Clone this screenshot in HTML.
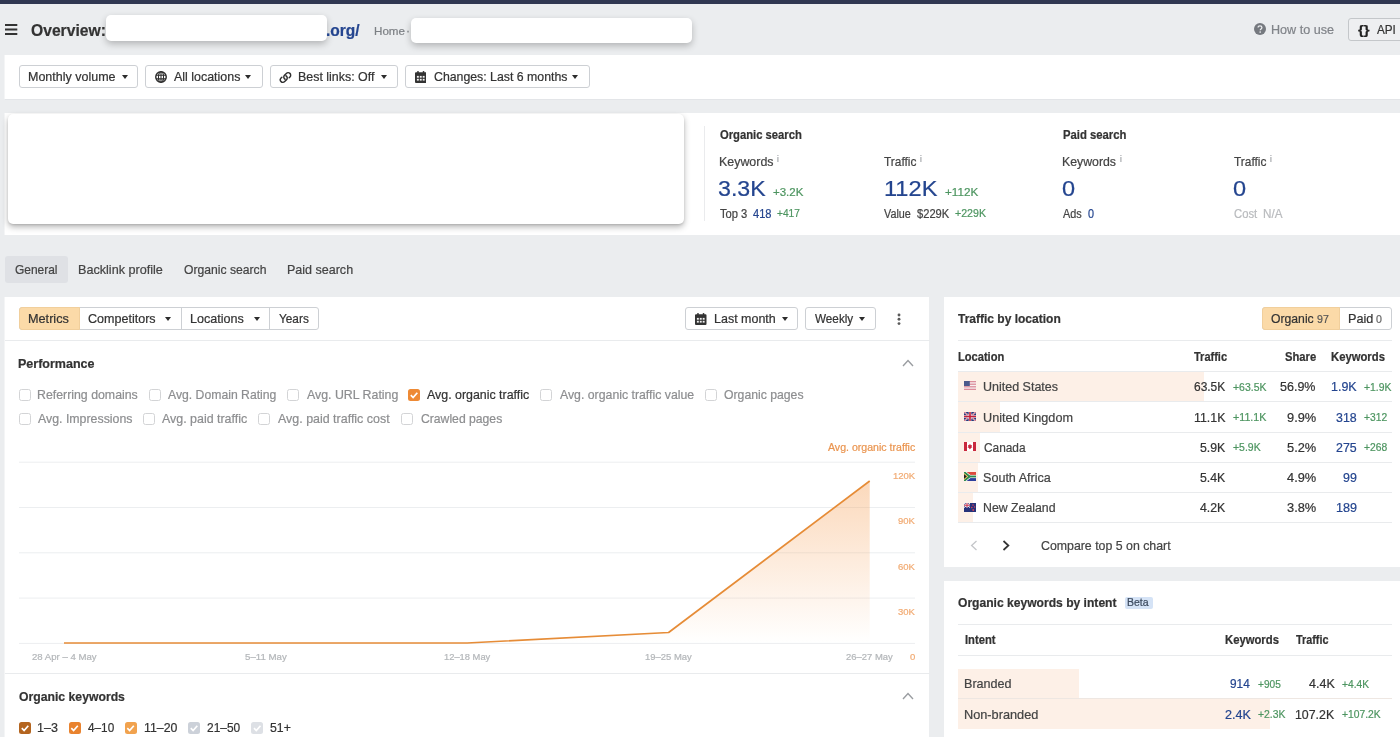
<!DOCTYPE html>
<html lang="en">
<head>
<meta charset="utf-8">
<title>Overview</title>
<style>
*{box-sizing:border-box;margin:0;padding:0}
html,body{width:1400px;height:737px;overflow:hidden}
body{background:#ebedef;font-family:"Liberation Sans",Arial,sans-serif;font-size:13px;color:#333;position:relative}
.a{position:absolute}
.t{position:absolute;white-space:nowrap;line-height:1;transform-origin:0 0;-webkit-text-stroke:.22px currentColor}
.btn{position:absolute;border:1px solid #cdd0d4;border-radius:3px;background:#fff}
.car{position:absolute;width:0;height:0;border-left:3.5px solid transparent;border-right:3.5px solid transparent;border-top:4.5px solid #2c2c2c}
.cb{position:absolute;width:12px;height:12px;border:1px solid #d3d4d6;border-radius:2.5px;background:#fff}
.cbx{position:absolute;width:12px;height:12px;border-radius:2.5px}
.hl{position:absolute;height:1px;background:#e9ebed}
.bar{position:absolute;background:#fdf0e7}
</style>
</head>
<body>
<!-- top stripe -->
<div class="a" style="left:0;top:0;width:1400px;height:4px;background:#303751"></div>

<!-- header -->
<svg class="a" style="left:5px;top:23px" width="13" height="13" viewBox="0 0 13 13"><rect x="0" y="1" width="12.3" height="2" fill="#333"/><rect x="0" y="5.5" width="12.3" height="2" fill="#333"/><rect x="0" y="10" width="12.3" height="2" fill="#333"/></svg>
<div class="a" style="left:106px;top:15px;width:221px;height:26px;background:#fff;border-radius:5px;box-shadow:0 3px 7px rgba(0,0,0,.24)"></div>
<div class="a" style="left:411px;top:18px;width:281px;height:25px;background:#fff;border-radius:5px;box-shadow:0 3px 7px rgba(0,0,0,.24)"></div>
<svg class="a" style="left:1254px;top:23.4px" width="12" height="12" viewBox="0 0 12 12"><circle cx="6" cy="6" r="6" fill="#75797f"/><path d="M4.1 4.6c0-1.1.8-1.8 1.9-1.8s1.9.7 1.9 1.7c0 1.4-1.7 1.4-1.7 2.7" fill="none" stroke="#ebedef" stroke-width="1.3"/><circle cx="6.2" cy="9" r=".85" fill="#ebedef"/></svg>
<div class="btn" style="left:1347.5px;top:18px;width:60px;height:23px;background:#eeeff1;border-color:#c4c7ca"></div>

<!-- half-pixel left edge -->
<div class="a" style="left:4px;top:55px;width:1px;height:44px;background:#f4f5f6"></div><div class="a" style="left:4px;top:113px;width:1px;height:122px;background:#f4f5f6"></div><div class="a" style="left:4px;top:297px;width:1px;height:440px;background:#f4f5f6"></div>
<!-- filter bar -->
<div class="a" style="left:5px;top:55px;width:1395px;height:44.5px;background:#fff;border-bottom:1px solid #e3e5e8"></div>
<div class="btn" style="left:19px;top:65px;width:118.5px;height:23px"></div><div class="car" style="left:121.7px;top:75px"></div>
<div class="btn" style="left:145px;top:65px;width:117.5px;height:23px"></div><div class="car" style="left:245.3px;top:75px"></div>
<div class="btn" style="left:270px;top:65px;width:127.5px;height:23px"></div><div class="car" style="left:380.8px;top:75px"></div>
<div class="btn" style="left:405px;top:65px;width:184.5px;height:23px"></div><div class="car" style="left:572.3px;top:75px"></div>
<!-- globe -->
<svg class="a" style="left:155px;top:71.3px" width="12" height="12" viewBox="0 0 12 12" fill="none" stroke="#2e2e2e"><circle cx="6" cy="6" r="5.25" stroke-width="1.45"/><ellipse cx="6" cy="6" rx="2.55" ry="5.2" stroke-width="1.05"/><path d="M1 4.15h10M1 7.85h10M6 .8v10.400" stroke-width="1.05"/></svg>
<!-- link -->
<svg class="a" style="left:278.6px;top:70.7px" width="13" height="13" viewBox="0 0 14 14" fill="none" stroke="#2e2e2e" stroke-width="1.55" stroke-linecap="round"><path d="M6.600 8.900a2.700 2.700 0 0 1-.7-4.300l2-2a2.700 2.700 0 0 1 3.900 3.800l-.9.900"/><path d="M7.400 5.100a2.700 2.700 0 0 1 .7 4.300l-2 2a2.700 2.700 0 0 1-3.900-3.800l.9-.9"/></svg>
<!-- calendar -->
<svg class="a" style="left:414.5px;top:70.8px" width="11.5" height="12" viewBox="0 0 11.5 12"><path d="M0 2.2a1 1 0 0 1 1-1h9.5a1 1 0 0 1 1 1V11a1 1 0 0 1-1 1H1a1 1 0 0 1-1-1z" fill="#333"/><rect x="2.2" y="0" width="1.5" height="2.6" rx=".6" fill="#333"/><rect x="7.8" y="0" width="1.5" height="2.6" rx=".6" fill="#333"/><g fill="#f2f2f2"><rect x="1.9" y="4.9" width="1.9" height="1.8"/><rect x="4.8" y="4.9" width="1.9" height="1.8"/><rect x="7.700" y="4.9" width="1.9" height="1.8"/><rect x="1.9" y="7.800" width="1.9" height="1.8"/><rect x="4.8" y="7.800" width="1.9" height="1.8"/><rect x="7.700" y="7.800" width="1.9" height="1.8"/></g></svg>

<!-- summary strip -->
<div class="a" style="left:5px;top:112.5px;width:1395px;height:122.5px;background:#fff"></div>
<div class="a" style="left:8px;top:114px;width:676px;height:109.5px;background:#fff;border-radius:5px;box-shadow:0 3px 6px rgba(0,0,0,.29),0 1px 2px rgba(0,0,0,.10)"></div>
<div class="a" style="left:704px;top:126px;width:1px;height:95px;background:#eaebed"></div>

<!-- tabs -->
<div class="a" style="left:5px;top:256px;width:63px;height:26.5px;background:#dfe1e5;border-radius:3px"></div>

<!-- main panel -->
<div class="a" style="left:5px;top:297px;width:924.4px;height:440px;background:#fff"></div>
<!-- segmented -->
<div class="btn" style="left:19px;top:307px;width:300px;height:22.6px"></div>
<div class="a" style="left:19px;top:307px;width:60.5px;height:22.6px;background:#fbdaa8;border:1px solid #f1cf9c;border-radius:3px 0 0 3px"></div>
<div class="a" style="left:180.5px;top:308px;width:1px;height:21px;background:#cdd0d4"></div>
<div class="a" style="left:269px;top:308px;width:1px;height:21px;background:#cdd0d4"></div>
<div class="car" style="left:165.2px;top:317px"></div>
<div class="car" style="left:253.5px;top:317px"></div>
<div class="btn" style="left:685px;top:307px;width:112.5px;height:22.6px"></div><div class="car" style="left:781.6px;top:317px"></div>
<div class="btn" style="left:805px;top:307px;width:71px;height:22.6px"></div><div class="car" style="left:859.4px;top:317px"></div>
<svg class="a" style="left:695px;top:312.8px" width="11.5" height="12" viewBox="0 0 11.5 12"><path d="M0 2.2a1 1 0 0 1 1-1h9.5a1 1 0 0 1 1 1V11a1 1 0 0 1-1 1H1a1 1 0 0 1-1-1z" fill="#333"/><rect x="2.2" y="0" width="1.5" height="2.6" rx=".6" fill="#333"/><rect x="7.8" y="0" width="1.5" height="2.6" rx=".6" fill="#333"/><g fill="#f2f2f2"><rect x="1.9" y="4.9" width="1.9" height="1.8"/><rect x="4.8" y="4.9" width="1.9" height="1.8"/><rect x="7.700" y="4.9" width="1.9" height="1.8"/><rect x="1.9" y="7.800" width="1.9" height="1.8"/><rect x="4.8" y="7.800" width="1.9" height="1.8"/><rect x="7.700" y="7.800" width="1.9" height="1.8"/></g></svg>
<svg class="a" style="left:897px;top:312.600px" width="4" height="13" viewBox="0 0 4 13" fill="#5a5a5a"><circle cx="2" cy="2" r="1.45"/><circle cx="2" cy="6.300" r="1.45"/><circle cx="2" cy="10.600" r="1.45"/></svg>
<div class="hl" style="left:5px;top:340.3px;width:924.5px"></div>
<svg class="a" style="left:901.5px;top:359px" width="12" height="8" viewBox="0 0 12 8" fill="none" stroke="#9a9da1" stroke-width="1.4"><path d="M1 7l5-5.4 5 5.4"/></svg>

<!-- checkboxes -->
<div class="cb" style="left:19px;top:389px"></div>
<div class="cb" style="left:149px;top:389px"></div>
<div class="cb" style="left:287.3px;top:389px"></div>
<div class="cbx" style="left:407.5px;top:389px;background:#ee8a35"></div>
<svg class="a" style="left:407.5px;top:389px" width="12" height="12" viewBox="0 0 12 12" fill="none" stroke="#fff" stroke-width="1.7"><path d="M2.8 6.2l2.3 2.3 4.2-4.8"/></svg>
<div class="cb" style="left:540.3px;top:389px"></div>
<div class="cb" style="left:705px;top:389px"></div>
<div class="cb" style="left:19px;top:412.7px"></div>
<div class="cb" style="left:142.8px;top:412.7px"></div>
<div class="cb" style="left:258.3px;top:412.7px"></div>
<div class="cb" style="left:401.3px;top:412.7px"></div>

<!-- chart -->
<svg class="a" style="left:0;top:440px" width="930" height="220" viewBox="0 440 930 220">
<defs><linearGradient id="g" x1="0" y1="480" x2="0" y2="643" gradientUnits="userSpaceOnUse"><stop offset="0" stop-color="#f6a35c" stop-opacity=".42"/><stop offset="1" stop-color="#f6a35c" stop-opacity="0"/></linearGradient></defs>
<g stroke="#eceef0" stroke-width="1"><path d="M19 462.2H915M19 507.5H915M19 552.8H915M19 598.1H915M19 643.4H915"/></g>
<path d="M64 643L265.5 643L467.200 643L668.600 632.5L869.700 481V643H64z" fill="url(#g)"/>
<path d="M64 643L265.5 643L467.200 643L668.600 632.5L869.700 481" fill="none" stroke="#e68c37" stroke-width="1.700" stroke-linejoin="round"/>
</svg>
<div class="hl" style="left:5px;top:673.3px;width:924.5px"></div>
<svg class="a" style="left:901.5px;top:692px" width="12" height="8" viewBox="0 0 12 8" fill="none" stroke="#9a9da1" stroke-width="1.4"><path d="M1 7l5-5.4 5 5.4"/></svg>

<!-- legend checkboxes -->
<div class="cbx" style="left:19px;top:721.8px;background:#b4651f"></div>
<div class="cbx" style="left:68.5px;top:721.8px;background:#e9832f"></div>
<div class="cbx" style="left:124.5px;top:721.8px;background:#f1a24e"></div>
<div class="cbx" style="left:188px;top:721.8px;background:#ccd1d9"></div>
<div class="cbx" style="left:251.2px;top:721.8px;background:#dde0e5"></div>
<svg class="a" style="left:19px;top:721.8px" width="250" height="12" viewBox="0 0 250 12" fill="none" stroke="#fff" stroke-width="1.7"><path d="M2.8 6.2l2.3 2.3 4.2-4.8M52.3 6.2l2.3 2.3 4.2-4.8M108.3 6.2l2.3 2.3 4.2-4.8M171.8 6.2l2.3 2.3 4.2-4.8M235 6.2l2.3 2.3 4.2-4.8"/></svg>

<!-- right panel 1 -->
<div class="a" style="left:943.5px;top:297px;width:457px;height:270px;background:#fff"></div>
<div class="btn" style="left:1262px;top:307px;width:129.6px;height:22.6px"></div>
<div class="a" style="left:1262px;top:307px;width:77.5px;height:22.6px;background:#fbdaa8;border:1px solid #f1cf9c;border-radius:3px 0 0 3px"></div>
<div class="hl" style="left:958px;top:340.3px;width:433.6px"></div>
<div class="bar" style="left:958px;top:371.7px;width:245.8px;height:30px"></div>
<div class="bar" style="left:958px;top:402px;width:42px;height:30.3px"></div>
<div class="bar" style="left:958px;top:432.3px;width:21.5px;height:30.2px"></div>
<div class="bar" style="left:958px;top:462.5px;width:19.5px;height:30.2px"></div>
<div class="bar" style="left:958px;top:492.7px;width:15px;height:30.2px"></div>
<div class="hl" style="left:958px;top:371px;width:433.6px"></div>
<div class="hl" style="left:958px;top:401px;width:433.6px"></div>
<div class="hl" style="left:958px;top:432px;width:433.6px"></div>
<div class="hl" style="left:958px;top:462px;width:433.6px"></div>
<div class="hl" style="left:958px;top:492.3px;width:433.6px"></div>
<div class="hl" style="left:958px;top:522px;width:433.6px"></div>
<svg class="a" style="left:964.2px;top:381.3px" width="12" height="9" viewBox="0 0 12 9"><rect width="12" height="9" fill="#f6eef0"/><g fill="#dc8e9b"><rect y="0" width="12" height="1.3"/><rect y="2.57" width="12" height="1.3"/><rect y="5.14" width="12" height="1.3"/><rect y="7.7" width="12" height="1.3"/></g><rect width="5.8" height="5" fill="#4b5a8c"/></svg>
<svg class="a" style="left:964.2px;top:411.6px" width="12" height="9" viewBox="0 0 12 9"><rect width="12" height="9" fill="#27387a"/><path d="M0 0l12 9M12 0L0 9" stroke="#e8e4ee" stroke-width="1.5"/><path d="M0 0l12 9M12 0L0 9" stroke="#c8334a" stroke-width=".7"/><path d="M6 0v9M0 4.5h12" stroke="#f4eef2" stroke-width="2.6"/><path d="M6 0v9M0 4.5h12" stroke="#c4203a" stroke-width="1.6"/></svg>
<svg class="a" style="left:964.2px;top:441.9px" width="12" height="9" viewBox="0 0 12 9"><rect width="12" height="9" fill="#fff"/><rect width="3" height="9" fill="#c9283d"/><rect x="9" width="3" height="9" fill="#c9283d"/><path d="M6 1.8l.8 1.4 1.2-.3-.5 1.6.9.7-1.6.7.1.9-.9-.1V8h-.1V6.700l-.9.1.1-.9-1.600-.7.900-.7-.5-1.600 1.200.3z" fill="#c9283d"/></svg>
<svg class="a" style="left:964.2px;top:472.1px" width="12" height="9" viewBox="0 0 12 9"><rect width="12" height="4.5" fill="#dc4a3c"/><rect y="4.5" width="12" height="4.500" fill="#2d3f9c"/><path d="M0 0l5.500 4.500L0 9" fill="none" stroke="#fff" stroke-width="3.400"/><path d="M4.500 4.500H12" stroke="#fff" stroke-width="3.200"/><path d="M0 0l5.500 4.500L0 9" fill="none" stroke="#2f8a4e" stroke-width="2"/><path d="M4.800 4.500H12" stroke="#2f8a4e" stroke-width="1.900"/><path d="M0 1.300L3.900 4.500 0 7.700z" fill="#e9b93a"/><path d="M0 2.200L2.800 4.500 0 6.800z" fill="#222"/></svg>
<svg class="a" style="left:964.2px;top:503.2px" width="12" height="9" viewBox="0 0 12 9"><rect width="12" height="9" fill="#26327a"/><path d="M0 0l6 4.500M6 0L0 4.500" stroke="#fff" stroke-width="1"/><path d="M3 0v4.500M0 2.250h6" stroke="#fff" stroke-width="1.700"/><path d="M3 0v4.500M0 2.250h6" stroke="#c8253e" stroke-width=".9"/><g fill="#d8405a"><circle cx="9" cy="2" r=".8"/><circle cx="10.600" cy="4" r=".8"/><circle cx="7.800" cy="4.600" r=".8"/><circle cx="9.200" cy="7" r=".9"/></g></svg>

<svg class="a" style="left:970px;top:540.3px" width="8" height="11" viewBox="0 0 8 11" fill="none" stroke="#c4c6c9" stroke-width="1.3"><path d="M6.5 1L1.6 5.5 6.5 10"/></svg>
<svg class="a" style="left:1002px;top:540.3px" width="8" height="11" viewBox="0 0 8 11" fill="none" stroke="#333" stroke-width="1.7"><path d="M1.5 1l4.9 4.5L1.5 10"/></svg>

<!-- right panel 2 -->
<div class="a" style="left:943.5px;top:580.7px;width:457px;height:157px;background:#fff"></div>
<div class="a" style="left:1124.5px;top:597px;width:28px;height:11.5px;background:#d5e3f6;border-radius:2px"></div>
<div class="hl" style="left:958px;top:624px;width:433.6px"></div>
<div class="hl" style="left:958px;top:655px;width:433.6px"></div>
<div class="bar" style="left:958px;top:669px;width:120.5px;height:29.5px"></div>
<div class="bar" style="left:958px;top:698.5px;width:312px;height:30px"></div>
<div class="hl" style="left:958px;top:698.3px;width:433.6px;background:#eee7e2"></div>

<div id="tx" style="position:absolute;left:0;top:0;width:1400px;height:737px;will-change:transform">
<div class="t" style="left:30.90px;top:22.50px;font-size:16px;color:#333;transform:scaleX(0.9787);font-weight:700;">Overview:</div>
<div class="t" style="left:326.03px;top:22.50px;font-size:16px;color:#24458f;transform:scaleX(0.9706);font-weight:700;">.org/</div>
<div class="t" style="left:373.64px;top:25.50px;font-size:11px;color:#7d8085;transform:scaleX(1.0571);">Home</div>
<div class="t" style="left:406.40px;top:25.50px;font-size:11px;color:#7d8085;transform:scaleX(1.1000);">·</div>
<div class="t" style="left:1270.53px;top:23.00px;font-size:13px;color:#808489;transform:scaleX(0.9688);">How to use</div>
<div class="t" style="left:1357.75px;top:22.75px;font-size:13.5px;color:#222;transform:scaleX(1.1136);font-weight:700;">{}</div>
<div class="t" style="left:1377.00px;top:23.00px;font-size:13px;color:#333;transform:scaleX(0.9000);">API</div>
<div class="t" style="left:28.04px;top:70.00px;font-size:13px;color:#333;transform:scaleX(0.9611);">Monthly volume</div>
<div class="t" style="left:174.00px;top:70.00px;font-size:13px;color:#333;transform:scaleX(0.9565);">All locations</div>
<div class="t" style="left:298.04px;top:70.00px;font-size:13px;color:#333;transform:scaleX(0.9557);">Best links: Off</div>
<div class="t" style="left:433.50px;top:70.00px;font-size:13px;color:#333;transform:scaleX(0.9468);">Changes: Last 6 months</div>
<div class="t" style="left:719.50px;top:129.00px;font-size:12px;color:#333;transform:scaleX(0.9368);font-weight:700;">Organic search</div>
<div class="t" style="left:1063.00px;top:129.00px;font-size:12px;color:#333;transform:scaleX(0.9403);font-weight:700;">Paid search</div>
<div class="t" style="left:718.54px;top:155.00px;font-size:13px;color:#444;transform:scaleX(0.9554);">Keywords</div>
<div class="t" style="left:777.20px;top:154.50px;font-size:9px;color:#9a9da1;transform:scaleX(0.9000);">i</div>
<div class="t" style="left:884.00px;top:155.00px;font-size:13px;color:#444;transform:scaleX(0.9143);">Traffic</div>
<div class="t" style="left:920.20px;top:154.50px;font-size:9px;color:#9a9da1;transform:scaleX(0.9000);">i</div>
<div class="t" style="left:1062.05px;top:155.00px;font-size:13px;color:#444;transform:scaleX(0.9464);">Keywords</div>
<div class="t" style="left:1120.20px;top:154.50px;font-size:9px;color:#9a9da1;transform:scaleX(0.9000);">i</div>
<div class="t" style="left:1234.00px;top:155.00px;font-size:13px;color:#444;transform:scaleX(0.9143);">Traffic</div>
<div class="t" style="left:1270.20px;top:154.50px;font-size:9px;color:#9a9da1;transform:scaleX(0.9000);">i</div>
<div class="t" style="left:718.37px;top:178.25px;font-size:22.5px;color:#24458f;transform:scaleX(1.0289);">3.3K</div>
<div class="t" style="left:773.00px;top:187.25px;font-size:11.5px;color:#4d9560;">+3.2K</div>
<div class="t" style="left:883.75px;top:178.25px;font-size:22.5px;color:#24458f;transform:scaleX(1.0490);">112K</div>
<div class="t" style="left:944.50px;top:187.25px;font-size:11.5px;color:#4d9560;transform:scaleX(1.0156);">+112K</div>
<div class="t" style="left:1061.95px;top:178.25px;font-size:22.5px;color:#24458f;transform:scaleX(1.0455);">0</div>
<div class="t" style="left:1233.45px;top:178.25px;font-size:22.5px;color:#24458f;transform:scaleX(1.0455);">0</div>
<div class="t" style="left:719.50px;top:208.00px;font-size:12px;color:#444;transform:scaleX(0.9310);">Top 3</div>
<div class="t" style="left:752.50px;top:208.00px;font-size:12px;color:#24458f;transform:scaleX(0.9250);">418</div>
<div class="t" style="left:777.00px;top:208.25px;font-size:11.5px;color:#4d9560;transform:scaleX(0.8846);">+417</div>
<div class="t" style="left:884.00px;top:208.00px;font-size:12px;color:#444;transform:scaleX(0.9000);">Value</div>
<div class="t" style="left:916.50px;top:208.00px;font-size:12px;color:#444;transform:scaleX(0.9286);">$229K</div>
<div class="t" style="left:954.50px;top:208.25px;font-size:11.5px;color:#4d9560;transform:scaleX(0.9242);">+229K</div>
<div class="t" style="left:1063.00px;top:208.00px;font-size:12px;color:#444;transform:scaleX(0.9048);">Ads</div>
<div class="t" style="left:1087.50px;top:208.00px;font-size:12px;color:#24458f;transform:scaleX(0.9000);">0</div>
<div class="t" style="left:1234.00px;top:208.00px;font-size:12px;color:#b9bbbe;transform:scaleX(0.9400);">Cost</div>
<div class="t" style="left:1263.03px;top:208.00px;font-size:12px;color:#b9bbbe;transform:scaleX(0.9737);">N/A</div>
<div class="t" style="left:15.00px;top:263.00px;font-size:13px;color:#444;transform:scaleX(0.9196);">General</div>
<div class="t" style="left:78.03px;top:263.00px;font-size:13px;color:#444;transform:scaleX(0.9709);">Backlink profile</div>
<div class="t" style="left:183.75px;top:263.00px;font-size:13px;color:#444;transform:scaleX(0.9347);">Organic search</div>
<div class="t" style="left:286.54px;top:263.00px;font-size:13px;color:#444;transform:scaleX(0.9627);">Paid search</div>
<div class="t" style="left:28.02px;top:312.00px;font-size:13px;color:#333;transform:scaleX(0.9756);">Metrics</div>
<div class="t" style="left:88.00px;top:312.00px;font-size:13px;color:#333;transform:scaleX(0.9643);">Competitors</div>
<div class="t" style="left:189.78px;top:312.00px;font-size:13px;color:#333;transform:scaleX(0.9682);">Locations</div>
<div class="t" style="left:279.00px;top:312.00px;font-size:13px;color:#333;transform:scaleX(0.9091);">Years</div>
<div class="t" style="left:713.54px;top:312.00px;font-size:13px;color:#333;transform:scaleX(0.9603);">Last month</div>
<div class="t" style="left:815.00px;top:312.00px;font-size:13px;color:#333;transform:scaleX(0.9012);">Weekly</div>
<div class="t" style="left:18.04px;top:357.00px;font-size:13px;color:#333;transform:scaleX(0.9615);font-weight:700;">Performance</div>
<div class="t" style="left:37.45px;top:388.00px;font-size:13px;color:#8d8e90;transform:scaleX(0.9486);">Referring domains</div>
<div class="t" style="left:168.00px;top:388.00px;font-size:13px;color:#8d8e90;transform:scaleX(0.9391);">Avg. Domain Rating</div>
<div class="t" style="left:306.50px;top:388.00px;font-size:13px;color:#8d8e90;transform:scaleX(0.9500);">Avg. URL Rating</div>
<div class="t" style="left:427.00px;top:388.00px;font-size:13px;color:#333;transform:scaleX(0.9533);">Avg. organic traffic</div>
<div class="t" style="left:559.50px;top:388.00px;font-size:13px;color:#8d8e90;transform:scaleX(0.9454);">Avg. organic traffic value</div>
<div class="t" style="left:724.00px;top:388.00px;font-size:13px;color:#8d8e90;transform:scaleX(0.9405);">Organic pages</div>
<div class="t" style="left:38.00px;top:412.00px;font-size:13px;color:#8d8e90;transform:scaleX(0.9495);">Avg. Impressions</div>
<div class="t" style="left:162.00px;top:412.00px;font-size:13px;color:#8d8e90;transform:scaleX(0.9551);">Avg. paid traffic</div>
<div class="t" style="left:277.50px;top:412.00px;font-size:13px;color:#8d8e90;transform:scaleX(0.9573);">Avg. paid traffic cost</div>
<div class="t" style="left:420.50px;top:412.00px;font-size:13px;color:#8d8e90;transform:scaleX(0.9368);">Crawled pages</div>
<div class="t" style="left:827.50px;top:441.50px;font-size:11px;color:#ea9550;transform:scaleX(0.9615);">Avg. organic traffic</div>
<div class="t" style="left:893.00px;top:470.75px;font-size:9.5px;color:#f1ab74;">120K</div>
<div class="t" style="left:898.00px;top:515.75px;font-size:9.5px;color:#f1ab74;">90K</div>
<div class="t" style="left:898.00px;top:561.75px;font-size:9.5px;color:#f1ab74;">60K</div>
<div class="t" style="left:898.00px;top:606.75px;font-size:9.5px;color:#f1ab74;">30K</div>
<div class="t" style="left:910.00px;top:651.75px;font-size:9.5px;color:#f1ab74;">0</div>
<div class="t" style="left:31.50px;top:651.75px;font-size:9.5px;color:#b4b7ba;transform:scaleX(1.0117);">28 Apr – 4 May</div>
<div class="t" style="left:244.50px;top:651.75px;font-size:9.5px;color:#b4b7ba;transform:scaleX(1.0183);">5–11 May</div>
<div class="t" style="left:444.25px;top:651.75px;font-size:9.5px;color:#b4b7ba;transform:scaleX(0.9840);">12–18 May</div>
<div class="t" style="left:645.00px;top:651.75px;font-size:9.5px;color:#b4b7ba;transform:scaleX(0.9947);">19–25 May</div>
<div class="t" style="left:846.25px;top:651.75px;font-size:9.5px;color:#b4b7ba;transform:scaleX(0.9947);">26–27 May</div>
<div class="t" style="left:19.00px;top:690.00px;font-size:13px;color:#333;transform:scaleX(0.9397);font-weight:700;">Organic keywords</div>
<div class="t" style="left:37.29px;top:721.00px;font-size:13px;color:#333;transform:scaleX(0.9625);">1–3</div>
<div class="t" style="left:87.50px;top:721.00px;font-size:13px;color:#333;transform:scaleX(0.9052);">4–10</div>
<div class="t" style="left:143.55px;top:721.00px;font-size:13px;color:#333;transform:scaleX(0.9485);">11–20</div>
<div class="t" style="left:207.00px;top:721.00px;font-size:13px;color:#333;transform:scaleX(0.9167);">21–50</div>
<div class="t" style="left:270.00px;top:721.00px;font-size:13px;color:#333;transform:scaleX(0.9432);">51+</div>
<div class="t" style="left:958.00px;top:312.00px;font-size:13px;color:#333;transform:scaleX(0.9234);font-weight:700;">Traffic by location</div>
<div class="t" style="left:1271.40px;top:312.00px;font-size:13px;color:#333;transform:scaleX(0.9378);">Organic</div>
<div class="t" style="left:1317.00px;top:313.50px;font-size:11px;color:#555;transform:scaleX(0.9667);">97</div>
<div class="t" style="left:1347.62px;top:312.00px;font-size:13px;color:#333;transform:scaleX(0.9750);">Paid</div>
<div class="t" style="left:1375.60px;top:313.50px;font-size:11px;color:#666;transform:scaleX(0.9667);">0</div>
<div class="t" style="left:958.00px;top:351.00px;font-size:12px;color:#333;transform:scaleX(0.9250);font-weight:700;">Location</div>
<div class="t" style="left:1194.00px;top:351.00px;font-size:12px;color:#333;transform:scaleX(0.9167);font-weight:700;">Traffic</div>
<div class="t" style="left:1285.20px;top:351.00px;font-size:12px;color:#333;transform:scaleX(0.9333);font-weight:700;">Share</div>
<div class="t" style="left:1331.00px;top:351.00px;font-size:12px;color:#333;transform:scaleX(0.9404);font-weight:700;">Keywords</div>
<div class="t" style="left:983.04px;top:380.00px;font-size:13px;color:#444;transform:scaleX(0.9610);">United States</div>
<div class="t" style="left:1193.75px;top:380.00px;font-size:13px;color:#333;transform:scaleX(0.9191);">63.5K</div>
<div class="t" style="left:1233.00px;top:381.50px;font-size:11px;color:#4d9560;transform:scaleX(0.9500);">+63.5K</div>
<div class="t" style="left:1280.00px;top:380.00px;font-size:13px;color:#333;transform:scaleX(0.9622);">56.9%</div>
<div class="t" style="left:1331.04px;top:380.00px;font-size:13px;color:#24458f;transform:scaleX(0.9600);">1.9K</div>
<div class="t" style="left:1363.60px;top:381.50px;font-size:11px;color:#4d9560;transform:scaleX(0.9448);">+1.9K</div>
<div class="t" style="left:983.03px;top:411.00px;font-size:13px;color:#444;transform:scaleX(0.9725);">United Kingdom</div>
<div class="t" style="left:1193.55px;top:411.00px;font-size:13px;color:#333;transform:scaleX(0.9531);">11.1K</div>
<div class="t" style="left:1233.00px;top:411.50px;font-size:11px;color:#4d9560;transform:scaleX(0.9706);">+11.1K</div>
<div class="t" style="left:1287.00px;top:411.00px;font-size:13px;color:#333;transform:scaleX(0.9862);">9.9%</div>
<div class="t" style="left:1336.00px;top:411.00px;font-size:13px;color:#24458f;transform:scaleX(0.9524);">318</div>
<div class="t" style="left:1363.60px;top:411.50px;font-size:11px;color:#4d9560;transform:scaleX(0.9360);">+312</div>
<div class="t" style="left:984.00px;top:441.00px;font-size:13px;color:#444;transform:scaleX(0.9130);">Canada</div>
<div class="t" style="left:1200.40px;top:441.00px;font-size:13px;color:#333;transform:scaleX(0.9462);">5.9K</div>
<div class="t" style="left:1233.00px;top:441.50px;font-size:11px;color:#4d9560;transform:scaleX(0.9517);">+5.9K</div>
<div class="t" style="left:1287.00px;top:441.00px;font-size:13px;color:#333;transform:scaleX(0.9862);">5.2%</div>
<div class="t" style="left:1336.00px;top:441.00px;font-size:13px;color:#24458f;transform:scaleX(0.9524);">275</div>
<div class="t" style="left:1363.60px;top:441.50px;font-size:11px;color:#4d9560;transform:scaleX(0.9360);">+268</div>
<div class="t" style="left:983.03px;top:471.00px;font-size:13px;color:#444;transform:scaleX(0.9674);">South Africa</div>
<div class="t" style="left:1200.40px;top:471.00px;font-size:13px;color:#333;transform:scaleX(0.9462);">5.4K</div>
<div class="t" style="left:1287.00px;top:471.00px;font-size:13px;color:#333;transform:scaleX(0.9862);">4.9%</div>
<div class="t" style="left:1342.60px;top:471.00px;font-size:13px;color:#24458f;transform:scaleX(0.9571);">99</div>
<div class="t" style="left:983.05px;top:501.00px;font-size:13px;color:#444;transform:scaleX(0.9467);">New Zealand</div>
<div class="t" style="left:1200.40px;top:501.00px;font-size:13px;color:#333;transform:scaleX(0.9462);">4.2K</div>
<div class="t" style="left:1287.00px;top:501.00px;font-size:13px;color:#333;transform:scaleX(0.9862);">3.8%</div>
<div class="t" style="left:1335.63px;top:501.00px;font-size:13px;color:#24458f;transform:scaleX(0.9700);">189</div>
<div class="t" style="left:1040.75px;top:539.00px;font-size:13px;color:#444;transform:scaleX(0.9489);">Compare top 5 on chart</div>
<div class="t" style="left:958.00px;top:596.00px;font-size:13px;color:#333;transform:scaleX(0.9298);font-weight:700;">Organic keywords by intent</div>
<div class="t" style="left:1127.05px;top:596.50px;font-size:11px;color:#3c4a5e;transform:scaleX(0.9545);">Beta</div>
<div class="t" style="left:964.75px;top:634.00px;font-size:12px;color:#333;transform:scaleX(0.9318);font-weight:700;">Intent</div>
<div class="t" style="left:1225.40px;top:634.00px;font-size:12px;color:#333;transform:scaleX(0.9404);font-weight:700;">Keywords</div>
<div class="t" style="left:1295.60px;top:634.00px;font-size:12px;color:#333;transform:scaleX(0.9000);font-weight:700;">Traffic</div>
<div class="t" style="left:963.78px;top:677.00px;font-size:13px;color:#444;transform:scaleX(0.9677);">Branded</div>
<div class="t" style="left:1229.60px;top:677.00px;font-size:13px;color:#24458f;transform:scaleX(0.9091);">914</div>
<div class="t" style="left:1257.60px;top:678.50px;font-size:11px;color:#4d9560;transform:scaleX(0.9200);">+905</div>
<div class="t" style="left:1308.60px;top:677.00px;font-size:13px;color:#333;transform:scaleX(0.9615);">4.4K</div>
<div class="t" style="left:1341.60px;top:678.50px;font-size:11px;color:#4d9560;transform:scaleX(0.9310);">+4.4K</div>
<div class="t" style="left:963.77px;top:708.00px;font-size:13px;color:#444;transform:scaleX(0.9791);">Non-branded</div>
<div class="t" style="left:1224.80px;top:708.00px;font-size:13px;color:#24458f;transform:scaleX(0.9692);">2.4K</div>
<div class="t" style="left:1257.60px;top:708.50px;font-size:11px;color:#4d9560;transform:scaleX(0.9448);">+2.3K</div>
<div class="t" style="left:1294.65px;top:708.00px;font-size:13px;color:#333;transform:scaleX(0.9500);">107.2K</div>
<div class="t" style="left:1341.60px;top:708.50px;font-size:11px;color:#4d9560;transform:scaleX(0.9366);">+107.2K</div>
</div>
</body>
</html>
